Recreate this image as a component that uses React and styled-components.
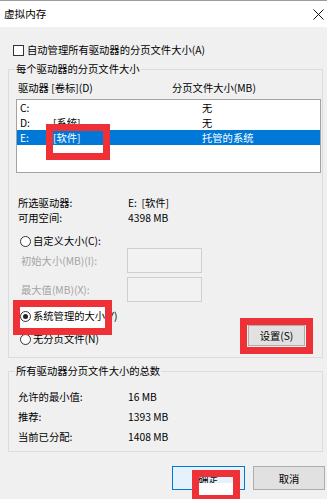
import React from "react";
import styled, { createGlobalStyle } from "styled-components";

const GlobalStyle = createGlobalStyle`
  html, body {
    margin: 0;
    padding: 0;
    background: #f0f0f0;
  }
  body {
    font-family: "Noto Sans CJK SC", "Noto Sans", sans-serif;
    font-size: 10.3px;
    color: #000;
  }
`;

const drives = [
  { letter: "C:", label: "", size: "无" },
  { letter: "D:", label: "[系统]", size: "无" },
  { letter: "E:", label: "[软件]", size: "托管的系统", selected: true },
];

const totals = [
  { label: "允许的最小值:", value: "16 MB" },
  { label: "推荐:", value: "1393 MB" },
  { label: "当前已分配:", value: "1408 MB" },
];

function App() {
  return (
    <Window>
      <GlobalStyle />
      <TitleBar>
        <Title>虚拟内存</Title>
        <Close>
          <svg width="11" height="11" viewBox="0 0 11 11">
            <path d="M0.5 0.5 L10.5 10.5 M10.5 0.5 L0.5 10.5" stroke="#111" strokeWidth="1" fill="none" />
          </svg>
        </Close>
      </TitleBar>

      <CheckRow>
        <CheckBox />
        自动管理所有驱动器的分页文件大小(A)
      </CheckRow>

      <Group>
        <Legend>每个驱动器的分页文件大小</Legend>
        <HeaderRow>
          <span>驱动器 [卷标](D)</span>
          <span>分页文件大小(MB)</span>
        </HeaderRow>
        <ListBox>
          {drives.map((d) => (
            <DriveRow key={d.letter} $selected={d.selected}>
              <span>{d.letter}</span>
              <span>{d.label}</span>
              <span>{d.size}</span>
            </DriveRow>
          ))}
        </ListBox>

        <InfoGrid>
          <span>所选驱动器:</span>
          <span>E:&nbsp; [软件]</span>
          <span>可用空间:</span>
          <span>4398 MB</span>
        </InfoGrid>

        <RadioRow $first>
          <Radio />
          自定义大小(C):
        </RadioRow>
        <FieldRow>
          <FieldLabel>初始大小(MB)(I):</FieldLabel>
          <Field disabled />
        </FieldRow>
        <FieldRow>
          <FieldLabel>最大值(MB)(X):</FieldLabel>
          <Field disabled />
        </FieldRow>

        <BottomRow>
          <RadioStack>
            <RadioRow>
              <Radio $checked />
              系统管理的大小(Y)
            </RadioRow>
            <RadioRow>
              <Radio />
              无分页文件(N)
            </RadioRow>
          </RadioStack>
          <SetButton>设置(S)</SetButton>
        </BottomRow>
      </Group>

      <Group $second>
        <Legend>所有驱动器分页文件大小的总数</Legend>
        <TotalsGrid>
          {totals.map((t) => (
            <React.Fragment key={t.label}>
              <span>{t.label}</span>
              <span>{t.value}</span>
            </React.Fragment>
          ))}
        </TotalsGrid>
      </Group>

      <Footer>
        <DialogButton $primary>确定</DialogButton>
        <DialogButton>取消</DialogButton>
      </Footer>

      {/* red annotation boxes drawn over the dialog */}
      <Mark $x={46} $y={124} $w={64} $h={36} />
      <MarkFill $x={20} $y={307} $w={85} $h={21} />
      <Mark $x={13} $y={300} $w={99} $h={35} />
      <Mark $x={240} $y={318} $w={73} $h={36} />
      <Mark $x={192} $y={470} $w={48} $h={32} />
      <MarkCover $x={199} $y={483} $w={34} $h={12} />
    </Window>
  );
}

export default App;

const Window = styled.div`
  position: relative;
  isolation: isolate;
  width: 327px;
  height: 499px;
  overflow: hidden;
  background: #f0f0f0;
`;

const TitleBar = styled.div`
  height: 26px;
  border-top: 1px solid #9c9c9c;
  background: #fff;
  display: flex;
  align-items: center;
  justify-content: space-between;
  padding: 0 3px 0 4px;
`;

const Title = styled.span`
  font-size: 10.6px;
  line-height: 14px;
`;

const Close = styled.span`
  display: flex;
  align-items: center;
`;

const CheckRow = styled.div`
  display: flex;
  align-items: center;
  gap: 3px;
  height: 16px;
  line-height: 16px;
  margin-top: 15px;
  padding-left: 13px;
`;

const CheckBox = styled.span`
  box-sizing: border-box;
  width: 11px;
  height: 11px;
  border: 1px solid #333;
  background: #fff;
`;

const Group = styled.fieldset`
  margin: ${(p) => (p.$second ? "6px" : "4px")} 4px 0 8px;
  border: 1px solid #dcdcdc;
  padding: ${(p) => (p.$second ? "9px 1px 4px 7px" : "5px 1px 11px 7px")};
  min-width: 0;
`;

const Legend = styled.legend`
  padding: 0 1px;
  margin-left: -1px;
  line-height: 14px;
`;

const HeaderRow = styled.div`
  display: grid;
  grid-template-columns: 154px 1fr;
  padding-left: 2px;
  height: 14px;
  line-height: 14px;
`;

const ListBox = styled.div`
  box-sizing: border-box;
  margin-top: 4px;
  height: 74px;
  border: 1px solid #a3a3a3;
  background: #fff;
`;

const DriveRow = styled.div`
  display: grid;
  grid-template-columns: 33px 149px 1fr;
  height: 15px;
  line-height: 15px;
  padding-left: 3px;
  background: ${(p) => (p.$selected ? "#0078d7" : "transparent")};
  color: ${(p) => (p.$selected ? "#fff" : "#000")};
`;

const InfoGrid = styled.div`
  display: grid;
  grid-template-columns: 110px 1fr;
  line-height: 15px;
  margin-top: 22px;
  padding-left: 2px;
`;

const RadioRow = styled.div`
  display: flex;
  align-items: center;
  gap: 2px;
  height: 14px;
  line-height: 14px;
  margin-top: ${(p) => (p.$first ? "9px" : "0")};
  padding-left: 4px;
`;

const Radio = styled.span`
  box-sizing: border-box;
  width: 11px;
  height: 11px;
  border-radius: 50%;
  border: 1px solid #333;
  background: #fff;
  display: flex;
  align-items: center;
  justify-content: center;
  &::after {
    content: "";
    display: ${(p) => (p.$checked ? "block" : "none")};
    width: 5px;
    height: 5px;
    border-radius: 50%;
    background: #222;
  }
`;

const FieldRow = styled.div`
  display: grid;
  grid-template-columns: 106px 75px;
  align-items: center;
  height: 25px;
  margin-bottom: 4px;
  padding-left: 5px;
`;

const FieldLabel = styled.span`
  color: #a4a4a4;
`;

const Field = styled.input`
  box-sizing: border-box;
  width: 75px;
  height: 25px;
  margin: 0;
  border: 1px solid #cfcfcf;
  background: #f2f2f2;
`;

const BottomRow = styled.div`
  display: flex;
  justify-content: space-between;
  align-items: flex-end;
  margin-top: 7px;
  padding-right: 16px;
`;

const RadioStack = styled.div`
  display: flex;
  flex-direction: column;
  gap: 9px;
`;

const SetButton = styled.button`
  box-sizing: border-box;
  width: 57px;
  height: 21px;
  padding: 0;
  font: inherit;
  color: #000;
  background: #e1e1e1;
  border: 1px solid #adadad;
`;

const TotalsGrid = styled.div`
  display: grid;
  grid-template-columns: 110px 1fr;
  line-height: 20px;
  padding-left: 2px;
`;

const Footer = styled.div`
  display: flex;
  justify-content: flex-end;
  gap: 8px;
  margin-top: 14px;
  padding-right: 2px;
`;

const DialogButton = styled.button`
  box-sizing: border-box;
  width: ${(p) => (p.$primary ? "73px" : "72px")};
  height: 24px;
  padding: 0;
  font: inherit;
  color: #000;
  background: ${(p) => (p.$primary ? "#e5f1fb" : "#e1e1e1")};
  border: 1px solid ${(p) => (p.$primary ? "#0078d7" : "#adadad")};
`;

const Mark = styled.div`
  position: absolute;
  z-index: 2;
  box-sizing: border-box;
  left: ${(p) => p.$x}px;
  top: ${(p) => p.$y}px;
  width: ${(p) => p.$w}px;
  height: ${(p) => p.$h}px;
  border: 7px solid #ee3136;
  pointer-events: none;
`;

const MarkFill = styled.div`
  position: absolute;
  z-index: -1;
  left: ${(p) => p.$x}px;
  top: ${(p) => p.$y}px;
  width: ${(p) => p.$w}px;
  height: ${(p) => p.$h}px;
  background: #fff;
`;

const MarkCover = styled(MarkFill)`
  z-index: 2;
`;
